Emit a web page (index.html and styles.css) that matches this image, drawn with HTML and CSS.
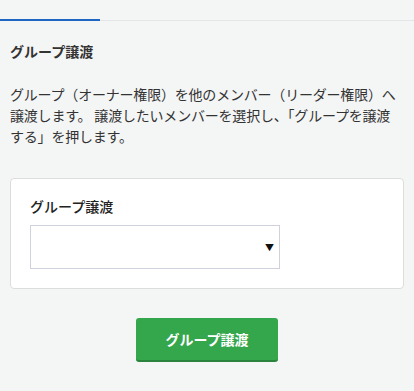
FILE: index.html
```html
<!DOCTYPE html>
<html lang="ja">
<head>
  <meta charset="UTF-8" />
  <title>グループ譲渡</title>
  <meta name="viewport" content="width=device-width, initial-scale=1" />
  <link rel="stylesheet" href="styles.css">
</head>
<body>
  <!-- Tabs -->
  <div class="tabs">
    <div class="tab active"></div>
  </div>

  <div class="content">
    <h2 class="title">グループ譲渡</h2>
    <p class="desc">グループ（オーナー権限）を他のメンバー（リーダー権限）へ譲渡します。 譲渡したいメンバーを選択し、「グループを譲渡する」を押します。</p>

    <div class="card">
      <label class="label">グループ譲渡</label>
      <div class="select">
        <span class="arrow">▼</span>
      </div>
    </div>

    <div class="actions">
      <button class="btn">グループ譲渡</button>
    </div>
  </div>
</body>
</html>
```

FILE: styles.css
```css
* {
  box-sizing: border-box;
}

body {
  margin: 0;
  font-family: "Noto Sans CJK JP", "Noto Sans", sans-serif;
  background: #f4f5f5;
  color: #333;
  font-size: 14px;
}

.tabs {
  height: 21px;
  border-bottom: 1px solid #e3e5e6;
}

.tab.active {
  width: 100px;
  height: 21px;
  border-bottom: 2px solid #1d66c1;
}

.content {
  padding: 0 10px;
}

.title {
  margin: 19px 0 0;
  font-size: 14px;
  font-weight: bold;
  line-height: 22px;
}

.desc {
  margin: 22px 0 0;
  padding-right: 6px;
  line-height: 21px;
  letter-spacing: -0.2px;
}

.card {
  margin-top: 31px;
  background: #fff;
  border: 1px solid #dcdede;
  border-radius: 4px;
  padding: 17px 19px 19px;
}

.label {
  display: block;
  font-size: 14px;
  font-weight: 500;
  line-height: 20px;
  color: #222;
}

.select {
  margin-top: 9px;
  width: 250px;
  height: 44px;
  border: 1px solid #cfd1dc;
  display: flex;
  align-items: center;
  justify-content: flex-end;
  padding-right: 5px;
}

.arrow {
  font-size: 9px;
  color: #111;
}

.actions {
  display: flex;
  justify-content: center;
  margin-top: 29px;
}

.btn {
  width: 142px;
  height: 44px;
  background: #34a64c;
  border: none;
  border-bottom: 2px solid #2a843d;
  border-radius: 3px;
  color: #fff;
  font-family: inherit;
  font-size: 14px;
  font-weight: bold;
}
```
